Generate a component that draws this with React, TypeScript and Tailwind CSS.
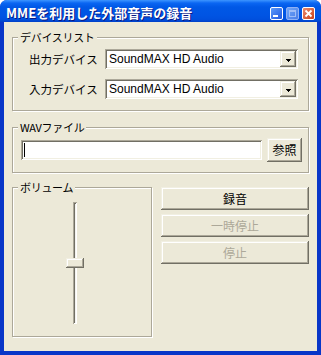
import React from "react";

const raised =
  "shadow-[inset_-1px_-1px_0_#716F64,inset_1px_1px_0_#F1EFE2,inset_-2px_-2px_0_#ACA899,inset_2px_2px_0_#FFFFFF]";
const sunken =
  "shadow-[inset_1px_1px_0_#ACA899,inset_-1px_-1px_0_#FFFFFF,inset_2px_2px_0_#716F64,inset_-2px_-2px_0_#F1EFE2]";
const etched =
  "border border-[#ACA899] shadow-[inset_1px_1px_0_#FFFFFF,1px_1px_0_#FFFFFF]";

function Group({
  label,
  className,
  children,
}: {
  label: string;
  className: string;
  children?: React.ReactNode;
}) {
  return (
    <div className={"relative " + etched + " " + className}>
      <span className="absolute left-[5px] -top-[9px] px-[2px] bg-[#ECE9D8] text-[11px] leading-[16px] tracking-[-0.3px] text-black">
        {label}
      </span>
      {children}
    </div>
  );
}

function Combo({ label }: { label: string }) {
  return (
    <div className="flex items-center">
      <span className="w-[76px] text-[11.5px] leading-[16px]">{label}</span>
      <div className={"flex-1 h-[20px] bg-white flex items-center p-[2px] " + sunken}>
        <span className="flex-1 pl-[2px] text-[12px] leading-[16px] font-['Liberation_Sans',sans-serif]">
          SoundMAX HD Audio
        </span>
        <div className={"w-[16px] h-[16px] bg-[#ECE9D8] flex items-center justify-center " + raised}>
          <svg width="5" height="3" className="mt-[2px]" shapeRendering="crispEdges">
            <path d="M0 0h5v1H0zM1 1h3v1H1zM2 2h1v1H2z" fill="#000" />
          </svg>
        </div>
      </div>
    </div>
  );
}

function Btn({ label, disabled }: { label: string; disabled?: boolean }) {
  return (
    <div
      className={
        "h-[23px] bg-[#ECE9D8] flex items-center justify-center text-[12px] leading-[16px] " +
        raised +
        (disabled ? " text-[#ACA899]" : " text-black")
      }
    >
      {label}
    </div>
  );
}

export default function App() {
  return (
    <div
      className="w-[321px] h-[355px] flex flex-col rounded-t-[7px] overflow-hidden bg-[#0836C8] font-['Noto_Sans_CJK_JP',sans-serif]"
    >
      <div className="h-[22px] flex items-center pt-[4px] pl-[6px] pr-[6px] bg-[linear-gradient(to_bottom,#3D95FF_0%,#0A66F2_14%,#0058E6_32%,#0054E3_70%,#0050DE_88%,#0040C8_100%)]">
        <span className="flex-1 text-white font-bold text-[13px] leading-[16px] [text-shadow:1px_1px_0_#0A1883]">
          MMEを利用した外部音声の録音
        </span>
        <div className="flex gap-[3px]">
          <div className="relative w-[13px] h-[13px] rounded-[2px] border border-white bg-[linear-gradient(135deg,#5C9BFA,#2258E0)]">
            <div className="absolute left-[2px] bottom-[2px] w-[5px] h-[2px] bg-white" />
          </div>
          <div className="relative w-[13px] h-[13px] rounded-[2px] border border-[#8FB0F5] bg-[linear-gradient(135deg,#6FA5F8,#4A7DE8)] flex items-center justify-center">
            <div className="w-[7px] h-[7px] border border-[#9FBDF7] border-t-2" />
          </div>
          <div className="relative w-[13px] h-[13px] rounded-[2px] border border-white bg-[linear-gradient(135deg,#E98B6E,#C8411B)] flex items-center justify-center">
            <svg width="9" height="9" viewBox="0 0 9 9">
              <path d="M1.5 1.5L7.5 7.5M7.5 1.5L1.5 7.5" stroke="#fff" strokeWidth="1.8" />
            </svg>
          </div>
        </div>
      </div>
      <div className="flex-1 mx-[4px] mb-[4px] bg-[#ECE9D8] flex flex-col px-[8px] pt-[15px] text-black">
        <Group label="デバイスリスト" className="pt-[11px] pb-[11px] pl-[16px] pr-[10px] flex flex-col gap-[10px]">
          <Combo label="出力デバイス" />
          <Combo label="入力デバイス" />
        </Group>
        <Group label="WAVファイル" className="mt-[16px] h-[46px] pl-[8px] pr-[6px] flex items-center gap-[5px]">
          <div className={"flex-1 h-[20px] bg-white flex items-center pl-[3px] " + sunken}>
            <div className="w-[1px] h-[14px] bg-black" />
          </div>
          <div className={"w-[35px] h-[24px] bg-[#ECE9D8] flex items-center justify-center text-[12px] leading-[16px] " + raised}>
            参照
          </div>
        </Group>
        <div className="mt-[14px] flex gap-[9px]">
          <Group label="ボリューム" className="w-[140px] h-[150px] pt-[14px] pl-[53px]">
            <div className="relative w-[18px] h-[122px] flex justify-center">
              <div className="w-[4px] h-[122px] bg-[#F4F3EE] shadow-[inset_1px_1px_0_#ACA899,inset_-1px_-1px_0_#FFFFFF,inset_2px_2px_0_#716F64]" />
              <div className={"absolute left-0 top-[56px] w-[18px] h-[10px] bg-[#ECE9D8] " + raised} />
            </div>
          </Group>
          <div className="flex-1 flex flex-col gap-[4px]">
            <Btn label="録音" />
            <Btn label="一時停止" disabled />
            <Btn label="停止" disabled />
          </div>
        </div>
      </div>
    </div>
  );
}
